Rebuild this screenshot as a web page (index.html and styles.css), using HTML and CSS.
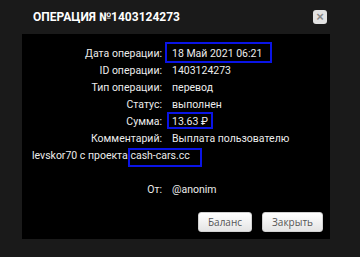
FILE: index.html
```html
<!DOCTYPE html>
<html lang="ru">

<head>
    <meta charset="UTF-8">
    <meta name="viewport" content="width=device-width, initial-scale=1.0">
    <title>Операция</title>
    <link rel="stylesheet" href="styles.css">
</head>

<body>
    <div class="modal">
        <div class="modal-header">
            <h2 class="modal-title">ОПЕРАЦИЯ №1403124273</h2>
            <button class="close-btn" type="button">&times;</button>
        </div>
        <div class="modal-body">
            <div class="row">
                <span class="label">Дата операции:</span><span class="value mark mark-date">18 Май 2021 06:21</span>
            </div>
            <div class="row">
                <span class="label">ID операции:</span><span class="value">1403124273</span>
            </div>
            <div class="row">
                <span class="label">Тип операции:</span><span class="value">перевод</span>
            </div>
            <div class="row">
                <span class="label">Статус:</span><span class="value">выполнен</span>
            </div>
            <div class="row">
                <span class="label">Сумма:</span><span class="value mark mark-sum">13.63 ₽</span>
            </div>
            <div class="row">
                <span class="label">Комментарий:</span><span class="value">Выплата пользователю</span>
            </div>
            <div class="row">
                <span>levskor70 с проекта </span><span class="mark mark-site">cash-cars.cc</span>
            </div>
            <div class="row row-from">
                <span class="label">От:</span><span class="value">@anonim</span>
            </div>
            <div class="buttons">
                <button type="button" class="btn">Баланс</button>
                <button type="button" class="btn">Закрыть</button>
            </div>
        </div>
    </div>
</body>

</html>
```

FILE: styles.css
```css
body {
    margin: 0;
    background-color: #1a1a1a;
    font-family: Roboto, Arial, sans-serif;
    color: #ececec;
}

.modal {
    width: 360px;
    height: 257px;
}

.modal-header {
    display: flex;
    align-items: center;
    justify-content: space-between;
    height: 34px;
    padding: 0 33px 0 33px;
    box-sizing: border-box;
}

.modal-title {
    margin: 0;
    font-size: 12px;
    font-weight: 700;
    color: #fff;
}

.close-btn {
    width: 14px;
    height: 14px;
    padding: 0;
    border: none;
    border-radius: 3px;
    background: #e2e2e2;
    color: #8a8a8a;
    font-size: 13px;
    font-weight: 700;
    line-height: 14px;
    font-family: Arial, sans-serif;
}

.modal-body {
    width: 308px;
    margin-left: 22px;
    height: 205px;
    box-sizing: border-box;
    padding: 11px 10px 0 10px;
    background: #000;
    font-size: 10.5px;
    line-height: 17px;
}

.row .label {
    display: inline-block;
    width: 130px;
    margin-right: 10px;
    text-align: right;
}

.row-from {
    margin-top: 17px;
}

.mark {
    position: relative;
}

.mark::after {
    content: "";
    position: absolute;
    border: 2px solid #0a14e6;
}

.mark-date::after {
    left: -7px;
    right: -10px;
    top: -5px;
    bottom: -3px;
}

.mark-sum::after {
    left: -5px;
    right: -5px;
    top: -3px;
    bottom: -1px;
}

.mark-site::after {
    left: -2px;
    right: -12px;
    top: -1px;
    bottom: -5px;
}

.buttons {
    display: flex;
    justify-content: flex-end;
    gap: 10px;
    margin-top: 14px;
    margin-right: -3px;
}

.btn {
    height: 20px;
    padding: 0 9px;
    border: 1px solid #d0d0d0;
    border-radius: 3px;
    background: linear-gradient(#ffffff, #e4e4e4);
    color: #555;
    font-family: "Open Sans", Arial, sans-serif;
    font-size: 10px;
}
```
